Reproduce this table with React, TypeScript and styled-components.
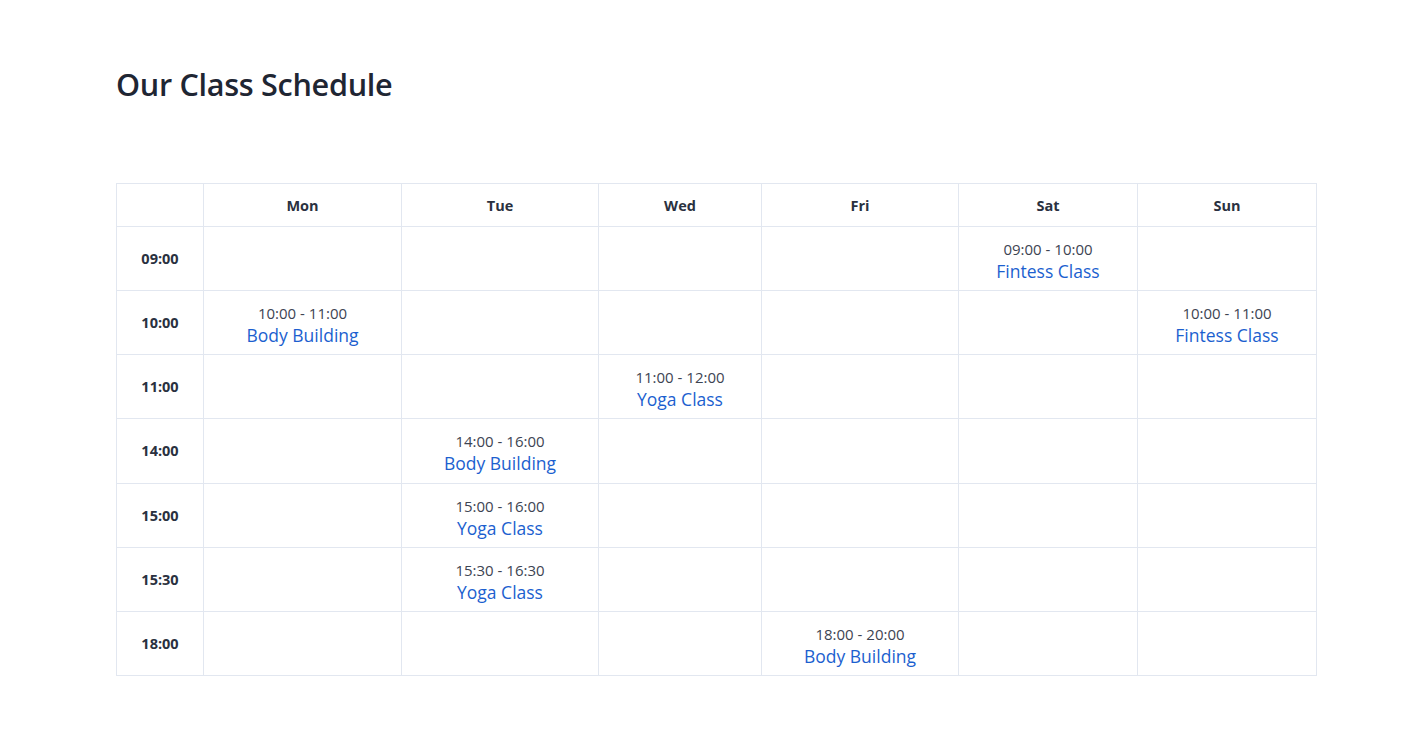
import React from 'react';
import styled, { createGlobalStyle } from 'styled-components';

const GlobalStyle = createGlobalStyle`
  body {
    margin: 0;
    background: #ffffff;
    font-family: 'Open Sans', 'Noto Sans', sans-serif;
  }
`;

interface Slot {
  range: string;
  name: string;
}

const days = ['Mon', 'Tue', 'Wed', 'Fri', 'Sat', 'Sun'];
const widths = [87, 198, 197, 163, 197, 179, 179];

const schedule: { time: string; slots: Record<string, Slot> }[] = [
  { time: '09:00', slots: { Sat: { range: '09:00 - 10:00', name: 'Fintess Class' } } },
  {
    time: '10:00',
    slots: {
      Mon: { range: '10:00 - 11:00', name: 'Body Building' },
      Sun: { range: '10:00 - 11:00', name: 'Fintess Class' },
    },
  },
  { time: '11:00', slots: { Wed: { range: '11:00 - 12:00', name: 'Yoga Class' } } },
  { time: '14:00', slots: { Tue: { range: '14:00 - 16:00', name: 'Body Building' } } },
  { time: '15:00', slots: { Tue: { range: '15:00 - 16:00', name: 'Yoga Class' } } },
  { time: '15:30', slots: { Tue: { range: '15:30 - 16:30', name: 'Yoga Class' } } },
  { time: '18:00', slots: { Fri: { range: '18:00 - 20:00', name: 'Body Building' } } },
];

const App = () => {
  return (
    <>
      <GlobalStyle />
      <Page>
        <Title>Our Class Schedule</Title>
        <Table>
          <colgroup>
            {widths.map((w, i) => (
              <col key={i} style={{ width: w }} />
            ))}
          </colgroup>
          <thead>
            <tr>
              <HeadCell />
              {days.map((d) => (
                <HeadCell key={d}>{d}</HeadCell>
              ))}
            </tr>
          </thead>
          <tbody>
            {schedule.map((row) => (
              <tr key={row.time}>
                <TimeCell>{row.time}</TimeCell>
                {days.map((d) => {
                  const slot = row.slots[d];
                  return (
                    <Cell key={d}>
                      {slot && (
                        <>
                          <Range>{slot.range}</Range>
                          <ClassName>{slot.name}</ClassName>
                        </>
                      )}
                    </Cell>
                  );
                })}
              </tr>
            ))}
          </tbody>
        </Table>
      </Page>
    </>
  );
};

export default App;

const Page = styled.div`
  padding: 62px 0 0 116px;
  width: 1200px;
`;

const Title = styled.h1`
  margin: 0 0 77px;
  font-size: 30.6px;
  font-weight: 600;
  color: #1f2633;
  line-height: 44px;
  letter-spacing: -0.3px;
`;

const Table = styled.table`
  width: 1200px;
  border-collapse: collapse;
  table-layout: fixed;
`;

const HeadCell = styled.th`
  height: 42px;
  padding: 0;
  border: 1px solid #e2e7f0;
  font-size: 14.5px;
  font-weight: 700;
  color: #2a3140;
  text-align: center;
  vertical-align: middle;
`;

const TimeCell = styled.td`
  height: 63.15px;
  padding: 0;
  border: 1px solid #e2e7f0;
  font-size: 14.5px;
  font-weight: 700;
  color: #2a3140;
  text-align: center;
  vertical-align: middle;
`;

const Cell = styled.td`
  height: 63.15px;
  padding: 0;
  border: 1px solid #e2e7f0;
  text-align: center;
  vertical-align: middle;
`;

const Range = styled.div`
  padding-top: 6px;
  font-size: 15px;
  line-height: 20px;
  color: #3d4452;
`;

const ClassName = styled.div`
  font-size: 17.5px;
  line-height: 25px;
  color: #1c5fcf;
`;
